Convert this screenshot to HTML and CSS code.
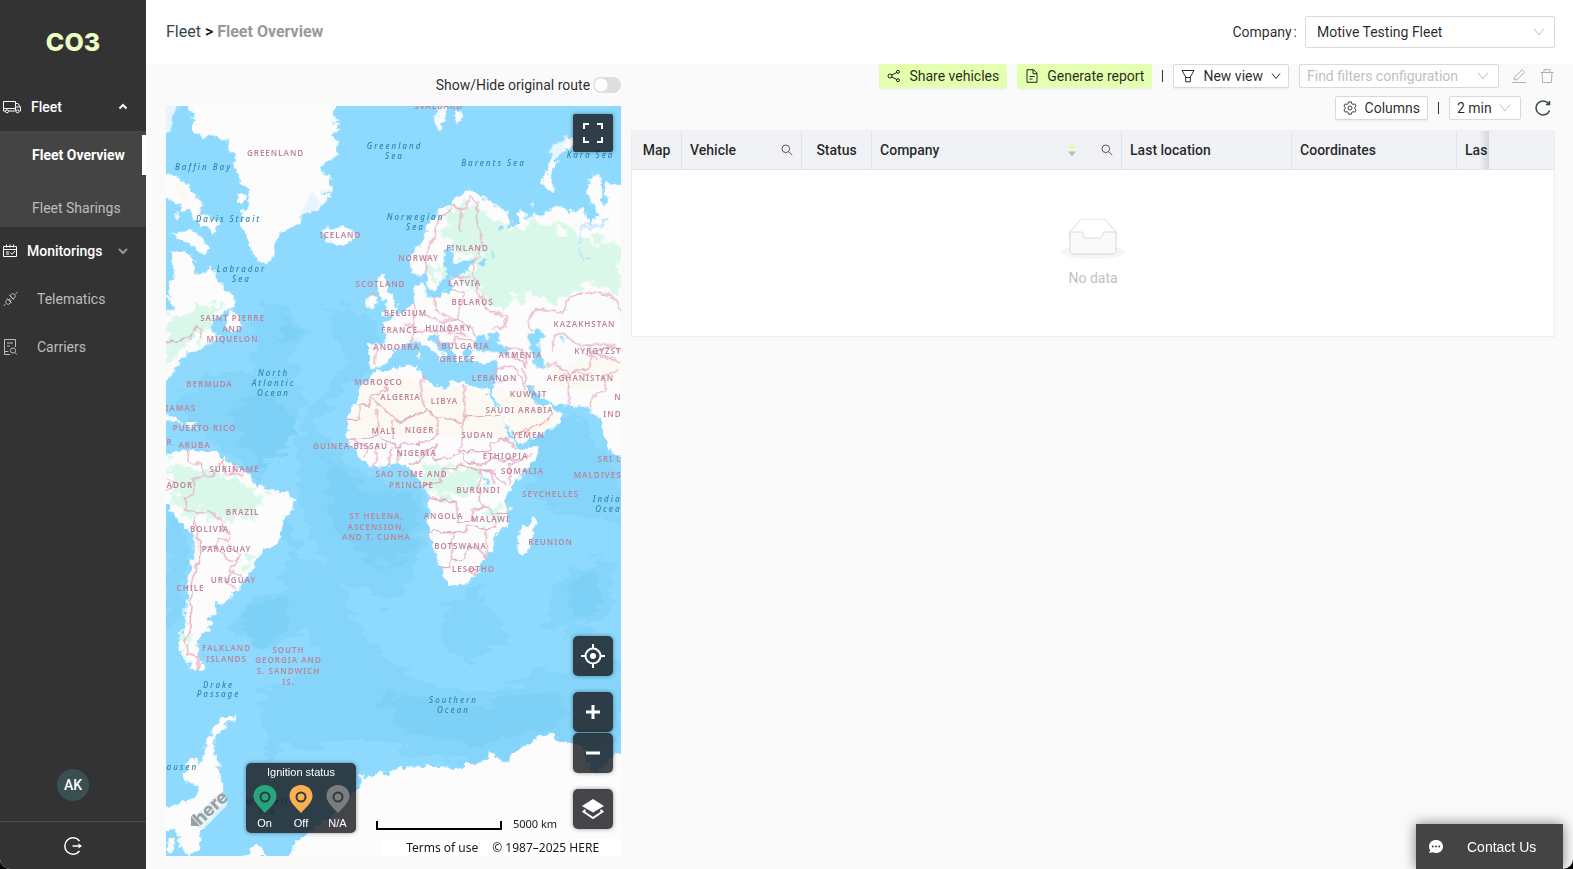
FILE: index.html
```html
<!DOCTYPE html>
<html lang="en">
<head>
<meta charset="utf-8">
<title>Fleet Overview</title>
<link rel="stylesheet" href="styles.css">
</head>
<body>
<div class="app">
  <aside class="sidebar">
    <div class="logo">CO3</div>
    <nav class="nav">
      <button class="nav-item nav-group" type="button">
        <svg class="nav-icon" viewBox="0 0 20 16" width="20" height="16"><path d="M1.500 2.500h12v9M1.500 2.500v9.500h2M6.500 12h7M13.500 4.500h2.500l2.500 4v3.500H17.500M13.500 8h5M1.500 9.500h12"/><circle cx="5" cy="12.300" r="1.500"/><circle cx="15.500" cy="12.300" r="1.500"/></svg>
        <span class="nav-text fleet-text">Fleet</span>
        <svg class="caret" viewBox="0 0 10 10" width="10" height="10"><path d="M1.500 6.500 5 3l3.500 3.500" stroke-width="2"/></svg>
      </button>
      <div class="submenu">
        <a class="sub-item active" href="#overview">Fleet Overview</a>
        <a class="sub-item" href="#sharings">Fleet Sharings</a>
      </div>
      <button class="nav-item nav-group" type="button">
        <svg class="nav-icon" viewBox="0 0 16 16" width="16" height="16"><path d="M1.500 3.500h13v10h-13zM1.500 6.500h13M4.500 1.500v3M8 1.500v3M11.500 1.500v3M4 9h3M4 11h3M8.500 9.500l1.500 1.800L13 8"/></svg>
        <span class="nav-text">Monitorings</span>
        <svg class="caret dim" viewBox="0 0 10 10" width="10" height="10"><path d="M1 3l4 4 4-4" stroke-width="2"/></svg>
      </button>
      <a class="nav-item dim" href="#telematics">
        <svg class="nav-icon" viewBox="0 0 16 16" width="16" height="16"><path d="M15.500 1l-2.200 2.200M8 4.800l1.800-1.800c1.500-1.300 4.500 1.400 3.200 3.200L11.200 8zM7.300 4l4.700 4.700M1.500 15l2.200-2.200M9 11.200l-1.800 1.800c-1.500 1.300-4.500-1.400-3.200-3.200L5.800 8zM5 7.300l4.700 4.700M6.800 9l1.500-1.500M8 10.200l1.500-1.500"/></svg>
        <span class="nav-text">Telematics</span>
      </a>
      <a class="nav-item dim" href="#carriers">
        <svg class="nav-icon" viewBox="0 0 16 16" width="16" height="16"><path d="M8 15.500H2.500v-15h11V8M5 4h6M5 7h3M2.500 12.500h4"/><circle cx="11" cy="11.500" r="2.600"/><path d="M12.800 13.400l2.200 2.300"/></svg>
        <span class="nav-text">Carriers</span>
      </a>
    </nav>
    <div class="avatar">AK</div>
    <div class="logout">
      <button class="icon-btn" type="button" aria-label="Log out"><svg viewBox="0 0 20 20" width="20" height="20"><path d="M16.500 5A8.200 8.200 0 1 0 16.500 15M9.500 10H18"/><path d="M15.500 7.500 19 10l-3.500 2.500z" fill="#fff" stroke="none"/></svg></button>
    </div>
  </aside>

  <div class="page">
    <header class="topbar">
      <div class="crumbs"><a href="#fleet">Fleet</a> <span class="gt">&gt;</span> <span class="current">Fleet Overview</span></div>
      <div class="company">
        <label for="company">Company<span class="colon">:</span></label>
        <div class="select company-select"><select id="company"><option>Motive Testing Fleet</option></select><svg viewBox="0 0 12 12" width="12" height="12"><path d="M1 2.500l5 6.500 5-6.500"/></svg></div>
      </div>
    </header>

    <main class="content">
      <section class="map-col">
        <div class="route-row"><label for="route">Show/Hide original route</label><input id="route" class="switch" type="checkbox" role="switch"></div>
        <div class="map">
          <svg class="world" viewBox="0 0 456 750" preserveAspectRatio="xMidYMid slice">
            <defs>
              <filter id="rough" filterUnits="userSpaceOnUse" x="-60" y="-60" width="1500" height="2400">
                <feTurbulence type="fractalNoise" baseFrequency="0.05" numOctaves="4" seed="4"/>
                <feDisplacementMap in="SourceGraphic" scale="28" xChannelSelector="R" yChannelSelector="G"/>
              </filter>
              <filter id="line" filterUnits="userSpaceOnUse" x="-60" y="-60" width="1500" height="2400">
                <feTurbulence type="fractalNoise" baseFrequency="0.04" numOctaves="2" seed="4"/>
                <feDisplacementMap in="SourceGraphic" scale="24" xChannelSelector="R" yChannelSelector="G"/>
              </filter>
              <filter id="wave" filterUnits="userSpaceOnUse" x="-60" y="-60" width="1500" height="2400">
                <feTurbulence type="fractalNoise" baseFrequency="0.012 0.03" numOctaves="4" seed="9"/>
                <feDisplacementMap in="SourceGraphic" scale="90" xChannelSelector="R" yChannelSelector="G"/>
              </filter>
              <filter id="patch" filterUnits="userSpaceOnUse" x="-60" y="-60" width="1500" height="2400">
                <feTurbulence type="fractalNoise" baseFrequency="0.035" numOctaves="4" seed="12"/>
                <feDisplacementMap in="SourceGraphic" scale="90" xChannelSelector="R" yChannelSelector="G"/>
              </filter>
            </defs>
            <rect class="sea" width="456" height="750"/>
            <g transform="scale(.33333)">
              <g class="deep" filter="url(#wave)">
                <path d="M280 600L360 590 420 680 380 760 420 900 330 1000 260 1200 380 1330 500 1400 560 1520 700 1700 900 1760 1368 1650 1368 1900 1100 2020 820 1960 600 1900 300 1950 280 1780 460 1650 380 1480 330 1500 400 1300 200 1050 60 960 40 900 120 800 260 800z"/>
                <path d="M480 600L600 620 660 720 600 800 520 860 460 960 540 1060 620 1130 780 1150 790 1260 740 1400 680 1500 500 1420 400 1200 380 1000 460 880 540 760z"/>
                <path d="M1100 980L1250 930 1330 1060 1368 1100 1368 1250 1200 1230 1080 1150z"/>
                <path d="M1180 1400L1330 1360 1340 1500 1240 1590 1130 1560z"/>
                <path d="M840 1480L960 1450 1020 1600 900 1680 820 1600z"/>
                <path d="M0 1180L60 1280 60 1500 10 1560 0 1560zM240 1480L380 1440 430 1560 330 1620 200 1580z"/>
              </g>
              <g class="deeper" filter="url(#wave)">
                <path d="M200 900L340 860 380 980 300 1080 220 1000zM480 1060L600 1150 760 1180 740 1340 620 1380 500 1260zM240 1500L360 1480 380 1560 300 1610 230 1570zM1200 1430L1300 1400 1310 1490 1230 1550zM640 1760L900 1800 1200 1740 1180 1860 900 1920 700 1860zM360 620L400 700 340 720z"/>
              </g>
              <g class="land" filter="url(#rough)">
                <g transform="translate(-18 -138)">
                  <path d="M82 110L100 165 98 190 105 215 130 235 160 225 190 235 205 250 218 280 225 310 235 350 245 372 265 385 272 430 250 450 248 495 262 530 270 560 290 600 325 615 340 590 345 555 358 520 375 510 400 505 425 475 425 460 460 455 490 430 512 410 485 395 518 400 512 350 480 330 490 310 535 290 530 240 520 220 540 205 515 180 545 190 520 165 522 110z"/>
                  <path d="M-10 335L50 350 80 370 100 400 130 430 120 460 150 465 178 490 160 525 140 500 115 490 90 450 70 455 55 430 30 415-10 405zM35 520L70 515 95 510 130 535 150 570 135 585 100 560 60 540zM44 467L52 453 62 465 54 480zM232 405L250 395 262 412 250 430 234 422z"/>
                  <path d="M35 575L80 575 105 600 110 640 140 640 150 612 175 665 200 690 225 715 225 745 180 760 150 790 160 820 190 825 150 850 110 870 80 880 60 910 40 945-10 975-10 750 50 750 25 710 30 670 45 650zM215 750L235 770 250 800 215 815 195 800 205 775z"/>
                  <path d="M485 520L505 497 520 512 560 500 585 520 575 545 540 556 515 548z"/>
                  <path d="M655 650L678 645 680 670 690 700 715 740 705 765 670 765 680 735 670 710 650 690zM625 705L645 700 652 725 640 745 618 740z"/>
                </g>
                <g transform="translate(672 -138)">
                  <path d="M60 600L95 545 110 510 140 460 190 430 215 400 245 388 275 410 300 425 350 450 363 480 350 500 300 490 275 480 305 520 330 545 330 515 370 500 395 490 385 450 410 460 405 480 440 465 495 450 510 435 545 455 580 450 600 485 630 470 590 400 600 370 605 338 632 345 635 400 640 440 655 430 640 390 650 365 740 380 740 1190 675 1188 655 1150 635 1100 630 1070 605 1060 600 1040 540 1038 495 1030 450 1010 425 975 410 985 430 1020 455 1040 485 1030 495 1050 522 1065 510 1090 480 1110 430 1135 385 1152 368 1120 345 1085 325 1035 303 985 318 975 320 930 325 905 280 910 250 905 240 890 250 875 235 865 215 880 230 905 205 910 195 880 180 860 150 840 130 825 115 830 150 870 175 880 160 885 155 905 140 880 110 860 85 840 60 850 45 855 20 870 5 885-20 915-40 925-60 920-65 850-10 850-20 790 0 780 15 765 40 755 60 740 75 720 80 680 100 660 110 690 105 715 140 710 190 690 185 650 230 640 215 620 260 605 270 590 240 600 200 610 190 590 190 560 220 520 215 508 195 515 190 550 165 570 160 610 165 640 140 690 120 690 110 640 90 650 65 640z"/>
                  <path d="M130 165L150 145 172 140 170 165 155 215 140 195zM190 165L205 150 218 170 205 188zM540 228L500 260 470 330 455 370 490 400 485 340 510 280 560 250zM425 432L436 430 432 445zM85 880L95 878 92 898 85 895z"/>
                </g>
                <g transform="translate(672 792)">
                  <path d="M-42 0L-80 45-95 90-120 120-130 150-125 175-130 205-110 240-85 270-55 290-20 290 0 285 30 278 60 290 80 315 90 330 105 345 115 385 125 420 115 450 115 490 135 540 150 590 170 630 180 648 230 640 265 610 290 560 315 540 312 500 355 465 357 420 345 380 370 345 410 300 445 250 448 232 400 238 382 230 365 205 340 160 330 120 300 75 290 55 270 52 225 45 195 30 175 40 170 60 120 40 100 20 80-15 40-10 0 0z"/>
                  <path d="M432 440L440 460 415 550 390 555 383 520 390 480 410 465z"/>
                </g>
                <g transform="translate(-18 792)">
                  <path d="M-10 265L40 250 80 235 120 245 170 240 190 265 230 285 270 315 285 345 320 355 380 365 405 390 400 415 370 450 365 500 345 530 310 540 290 560 285 590 260 620 235 660 215 665 215 685 190 700 165 700 170 725 145 745 155 770 130 790 115 815 115 850 140 895 105 900 75 870 60 825 75 780 80 680 90 620 100 550 100 490 60 460 35 420-10 380z"/>
                  <path d="M18 135L50 145 70 162 40 155 18 145zM80 160L110 160 108 170 82 172zM18 0L45 0 18 30z"/>
                </g>
                <g transform="translate(-18 1542)">
                  <path d="M232 285L190 292 160 330 140 370 135 400 120 440 112 410 92 408 70 480 92 488 120 500 110 530 60 552-10 570-10 640 50 625 60 680 90 710 125 680 120 640 185 560 188 500 180 440 162 395 165 350z"/>
                  <path d="M380 740L400 680 430 650 500 600 560 550 600 500 600 460 620 480 650 455 680 460 720 445 780 438 830 440 890 445 960 425 985 420 992 395 1035 430 1060 395 1100 375 1140 345 1175 338 1190 360 1270 380 1280 420 1310 465 1330 440 1360 410 1430 370 1430 740zM245 720L290 670 320 710zM30 650L45 655 40 700 20 690z"/>
                </g>
              </g>
              <g class="sand" filter="url(#rough)">
                <path d="M590 830L700 805 800 850 900 840 960 870 1010 920 1030 990 880 990 700 985 560 990 545 950 580 880z"/>
                <path d="M990 850L1070 850 1120 900 1190 920 1150 970 1060 1005 1030 950zM1150 800L1300 740 1368 760 1368 800 1280 850 1160 840z"/>
                <path d="M85 1290L105 1260 95 1420 85 1450zM20 225L60 250 90 300 40 270z"/>
              </g>
              <g class="green" filter="url(#patch)">
                <path d="M990 380L1100 350 1200 370 1300 400 1368 420 1368 560 1260 530 1180 600 1080 560 1000 620 950 560 930 470z"/>
                <path d="M800 430L850 320 920 290 940 370 880 420 820 380zM790 490L830 460 820 540 790 530zM870 320L930 300 1010 350 960 430 880 460zM880 510L940 490 950 540 890 550z"/>
                <path d="M770 1060L860 1090 940 1080 950 1130 900 1170 820 1180 770 1130z"/>
                <path d="M10 1060L80 1090 150 1100 260 1150 300 1160 260 1230 180 1240 110 1220 60 1240 20 1180z"/>
                <path d="M0 640L120 600 180 590 150 640 90 690 50 740 0 780zM240 1350L280 1340 240 1410zM960 1200L1010 1190 1010 1250 970 1260zM50 1560L70 1560 60 1680 50 1640z"/>
              </g>
              <g class="ice" filter="url(#rough)"><path d="M-30-20H50L20 30 15 80-30 90zM405 320L440 250 470 300 490 270 450 310 400 330zM1160 120L1210 90 1180 150 1150 180zM810 20L830 10 820 60z"/></g>
              <g class="sea-over" filter="url(#rough)"><g transform="translate(672 -138)">
                <path d="M255 845L275 820 290 835 320 815 335 830 320 845 365 865 355 885 300 875 270 875zM415 830L450 810 465 830 445 850 460 900 470 920 440 925 430 890 418 860zM510 825L525 830 522 845zM280 590L292 595 285 615 272 610zM305 570L318 585 312 600zM285 1255L302 1262 298 1280 283 1275zM190 625L240 610 240 625 200 640z"/>
                <path d="M560 500L580 490 640 495 650 470 640 500 575 500 570 590 600 600" class="river"/>
              </g></g>
              <g class="borders" filter="url(#line)">
                <g transform="translate(672 -138)"><path d="M110 640L115 560 135 530 140 490 190 440 215 450 215 510M190 440L230 445 240 412 265 425 260 470 275 530 270 590 250 610 250 650 270 690 280 725 300 750 350 770 350 800 310 810M180 655L240 650M190 690L220 700 210 780 170 770 135 750 130 710M110 765L150 785 200 780 240 800 265 830M75 730L70 800 40 790M60 850L80 815 140 815 150 850 190 855 200 830 250 845M140 815L200 810M180 790L180 820 230 820M350 860L400 870 410 920 390 900 360 880M410 785L430 755 460 745 520 760 540 710 600 695 640 705 670 710 696 760M410 785L430 815M490 870L490 830 520 825 560 850 600 860 640 850 700 870M470 915L500 910 540 940 600 920 610 880 696 900M310 945L325 925 380 920 410 990M400 925L410 970 430 985M540 1035L540 980 525 940M600 1050L610 1010 650 990 640 950 690 930M-52 870L-40 870-45 915M540 940L600 940M660 860L590 880 620 900"/></g>
                <g transform="translate(672 792)"><path d="M-130 145H-90L-88 105-62 105-60 78-5 55 0 30M-60 80L30 155 80 130M-42 112L-32 195-90 205M100 20L95 80 110 125 145 140M225 45V140H330M222 140L215 210 205 250M110 125L10 160 10 205M145 140L215 160M145 140V190L120 215 45 220 20 235-30 200M-50 290L-30 225M-80 265L-60 235-100 210-130 210M0 285L5 235M25 278L30 230M60 290L90 270 140 220 130 270 180 265 215 240 225 275 285 285 300 265 340 270M215 240L240 245 300 245 310 215 350 205 380 240M340 270L400 265 430 250M360 340V285L400 265M100 345L150 340 160 300 215 285 275 300 270 350 265 380 285 410 250 420 250 450 205 455 200 395 115 382M115 485H230L240 470 290 475 290 560M190 490V560L180 590 150 590M190 570L220 565 250 530 290 560M285 410L310 420 315 470 290 475M275 300L300 305 350 345M310 430L355 430M240 595L265 600 255 615 240 605zM305 40L330 40 350 25M380 190L460 165 490 130M270 300H305L310 350"/></g>
                <g transform="translate(-18 792)"><path d="M80 240L90 275 125 285 130 320 160 315 190 265M185 265L200 320 250 310M230 285L215 315M125 320L100 330 105 370 75 385 80 415 110 430 145 420 185 445 190 480 210 490 205 520 180 500 170 530 120 530 105 440M170 530L205 565 230 575 245 550 205 530M245 550L210 605 205 640 230 655M120 530L120 570 100 630 95 700 90 790 75 820 85 850 115 860 115 900M18 370L45 340 18 325M215 605L250 625"/></g>
                <g transform="translate(-18 -138)"><path d="M-10 870L30 845 90 835 110 800 125 805 130 835M630 705L645 695 650 708"/></g>
              </g>
            </g>
            <g class="lbl">
              <text x="110" y="50">GREENLAND</text><text x="175" y="132">ICELAND</text>
              <text x="67" y="215">SAINT PIERRE</text><text x="67" y="226">AND</text><text x="67" y="236">MIQUELON</text>
              <text x="273" y="3">SVALBARD</text><text x="302" y="145">FINLAND</text><text x="253" y="155">NORWAY</text><text x="215" y="181">SCOTLAND</text><text x="299" y="180">LATVIA</text><text x="307" y="199">BELARUS</text><text x="240" y="210">BELGIUM</text><text x="234" y="227">FRANCE</text><text x="283" y="225">HUNGARY</text><text x="419" y="221">KAZAKHSTAN</text><text x="300" y="243">BULGARIA</text><text class="en" x="456" y="248">KYRGYZST</text><text x="231" y="244">ANDORRA</text><text x="292" y="256">GREECE</text><text x="355" y="252">ARMENIA</text>
              <text x="329" y="275">LEBANON</text><text x="415" y="275">AFGHANISTAN</text><text x="363" y="291">KUWAIT</text><text x="213" y="279">MOROCCO</text><text x="235" y="294">ALGERIA</text><text x="279" y="298">LIBYA</text><text x="354" y="307">SAUDI ARABIA</text><text class="en" x="456" y="311">IND</text><text class="en" x="456" y="294">N</text>
              <text x="218" y="328">MALI</text><text x="254" y="327">NIGER</text><text x="312" y="332">SUDAN</text><text x="363" y="332">YEMEN</text><text x="185" y="343">GUINEA-BISSAU</text><text x="251" y="350">NIGERIA</text><text x="340" y="353">ETHIOPIA</text><text x="357" y="368">SOMALIA</text><text class="en" x="456" y="356">SRI L</text><text class="en" x="456" y="372">MALDIVES</text>
              <text x="246" y="371">SAO TOME AND</text><text x="246" y="382">PRINCIPE</text><text x="313" y="387">BURUNDI</text><text x="385" y="391">SEYCHELLES</text><text x="211" y="413">ST HELENA,</text><text x="211" y="424">ASCENSION,</text><text x="211" y="434">AND T. CUNHA</text><text x="278" y="413">ANGOLA</text><text x="325" y="416">MALAWI</text><text x="295" y="443">BOTSWANA</text><text x="385" y="439">REUNION</text><text x="308" y="466">LESOTHO</text>
              <text x="44" y="281">BERMUDA</text><text class="st" x="0" y="305">IAMAS</text><text x="39" y="325">PUERTO RICO</text><text class="st" x="1" y="339">R</text><text x="29" y="342">ARUBA</text><text x="69" y="366">SURINAME</text><text class="st" x="1" y="382">ADOR</text><text x="77" y="409">BRAZIL</text><text x="44" y="426">BOLIVIA</text><text x="61" y="446">PARAGUAY</text><text x="68" y="477">URUGUAY</text><text x="25" y="485">CHILE</text>
              <text x="61" y="545">FALKLAND</text><text x="61" y="556">ISLANDS</text><text x="123" y="547">SOUTH</text><text x="123" y="557">GEORGIA AND</text><text x="123" y="568">S. SANDWICH</text><text x="123" y="579">IS.</text>
            </g>
            <g class="lbl water">
              <text x="38" y="64">Baffin Bay</text><text x="63" y="116">Davis Strait</text><text x="76" y="166">Labrador</text><text x="76" y="176">Sea</text><text x="229" y="43">Greenland</text><text x="229" y="53">Sea</text><text x="250" y="114">Norwegian</text><text x="250" y="124">Sea</text><text x="328" y="60">Barents Sea</text><text x="425" y="52">Kara Sea</text><text x="108" y="270">North</text><text x="108" y="280">Atlantic</text><text x="108" y="290">Ocean</text><text class="en" x="456" y="396">India</text><text class="en" x="456" y="406">Ocea</text><text x="53" y="582">Drake</text><text x="53" y="591">Passage</text><text class="st" x="1" y="664">ausen</text><text x="288" y="597">Southern</text><text x="288" y="607">Ocean</text><text x="102" y="699">Weddell</text><text x="102" y="708">Sea</text>
            </g>
          </svg>

          <div class="here"><svg viewBox="0 0 44 44" width="44" height="44"><path class="halo" d="M13 29L32 10"/><path class="tri" d="M3 24v10h9z"/><text class="here-text" transform="translate(12 34) rotate(-43)">here</text></svg></div>

          <button class="map-btn full" type="button" aria-label="Fullscreen"><svg viewBox="0 0 20 20" width="20" height="20"><path d="M1 6V1h5M14 1h5v5M19 14v5h-5M6 19H1v-5" stroke-width="2"/></svg></button>
          <div class="map-tools">
            <button class="map-btn" type="button" aria-label="My location"><svg viewBox="0 0 24 24" width="24" height="24"><circle cx="12" cy="12" r="7.500" stroke-width="2"/><circle cx="12" cy="12" r="3" fill="#fff" stroke="none"/><path d="M12 0v5M12 19v5M0 12h5M19 12h5" stroke-width="2"/></svg></button>
            <div class="zoom-pair">
              <button class="map-btn" type="button" aria-label="Zoom in"><svg viewBox="0 0 14 14" width="14" height="14"><path d="M0 7h14M7 0v14" stroke-width="3"/></svg></button>
              <button class="map-btn" type="button" aria-label="Zoom out"><svg viewBox="0 0 14 14" width="14" height="14"><path d="M0 7h14" stroke-width="3"/></svg></button>
            </div>
            <button class="map-btn" type="button" aria-label="Layers"><svg viewBox="0 0 22 22" width="22" height="22"><path d="M11 1l11 7-11 6.500L0 8z" fill="#fff" stroke="none"/><path d="M3.500 12L1.500 13.500 11 20l9.500-6.500-2-1.500" stroke-width="2"/></svg></button>
          </div>

          <div class="legend">
            <div>Ignition status</div>
            <ul class="pins">
              <li class="on"><svg viewBox="0 0 24 28" width="24" height="28"><path d="M12 0C5 0 .500 5 .500 11c0 6 6 11 11.500 17 5.500-6 11.500-11 11.500-17C23.500 5 19 0 12 0z"/><circle cx="12" cy="12" r="4.500"/></svg>On</li>
              <li class="off"><svg viewBox="0 0 24 28" width="24" height="28"><path d="M12 0C5 0 .500 5 .500 11c0 6 6 11 11.500 17 5.500-6 11.500-11 11.500-17C23.500 5 19 0 12 0z"/><circle cx="12" cy="12" r="4.500"/></svg>Off</li>
              <li class="na"><svg viewBox="0 0 24 28" width="24" height="28"><path d="M12 0C5 0 .500 5 .500 11c0 6 6 11 11.500 17 5.500-6 11.500-11 11.500-17C23.500 5 19 0 12 0z"/><circle cx="12" cy="12" r="4.500"/></svg>N/A</li>
            </ul>
          </div>
          <div class="scale"><span class="scale-bar"></span><span>5000 km</span></div>
          <div class="terms"><a href="#terms">Terms of use</a><span>© 1987–2025 HERE</span></div>
        </div>
      </section>

      <section class="list-col">
        <div class="tools">
          <button class="btn lime" type="button"><svg viewBox="0 0 14 14" width="14" height="14"><circle cx="3" cy="7" r="2"/><circle cx="11" cy="2.800" r="1.500"/><circle cx="11" cy="11.200" r="1.500"/><path d="M4.800 6l5-2.500M4.800 8l5 2.500"/></svg>Share vehicles</button>
          <button class="btn lime" type="button"><svg viewBox="0 0 14 14" width="14" height="14"><path d="M2 .700h6.500L12 4.200v9.100H2zM8 .700v4h4M4.500 7.500h5M4.500 10h3"/></svg>Generate report</button>
          <span class="sep"></span>
          <button class="btn" type="button"><svg viewBox="0 0 14 14" width="14" height="14"><path d="M1 1.500h12L9.300 8v4.800H4.700V8zM4.700 8.500h4.600"/></svg>New view<svg class="chev" viewBox="0 0 10 10" width="10" height="10"><path d="M1 2.500l4 5 4-5"/></svg></button>
          <div class="select filter-select"><select aria-label="Filters configuration"><option>Find filters configuration</option></select><svg viewBox="0 0 12 12" width="12" height="12"><path d="M1 2.500l5 6.500 5-6.500"/></svg></div>
          <div class="pair">
            <button class="icon-btn mute" type="button" aria-label="Edit"><svg viewBox="0 0 16 16" width="16" height="16"><path d="M1 14.500h14M3.200 12l.600-3L11 1.700l2.600 2.600-7.300 7.200z"/></svg></button>
            <button class="icon-btn mute" type="button" aria-label="Delete"><svg viewBox="0 0 16 16" width="16" height="16"><path d="M1.500 4.500h13M5 4.500v-3h6v3M3 4.500l.600 10h8.800l.600-10"/></svg></button>
          </div>
        </div>
        <div class="tools second">
          <button class="btn" type="button"><svg viewBox="0 0 16 16" width="14" height="14"><path d="M6.500 1h3l.500 2 1.500.900 2-.600L15 5.900 13.500 7.300v1.500L15 10.200l-1.500 2.600-2-.600-1.500.900-.500 2h-3l-.500-2-1.500-.900-2 .600L1 10.200l1.500-1.400V7.300L1 5.900l1.500-2.600 2 .600L6 3z"/><circle cx="8" cy="8" r="2.300"/></svg>Columns</button>
          <span class="sep"></span>
          <div class="select min-select"><select aria-label="Refresh interval"><option>2 min</option></select><svg viewBox="0 0 12 12" width="12" height="12"><path d="M1 2.500l5 6.500 5-6.500"/></svg></div>
          <button class="icon-btn reload" type="button" aria-label="Refresh"><svg viewBox="0 0 16 16" width="16" height="16"><path d="M13.500 3.500A7 7 0 1 0 14.600 10.500M14.500 1v3.500h-3.500"/></svg></button>
        </div>

        <table class="grid">
          <colgroup><col class="c50"><col class="c120"><col class="c70"><col class="c250"><col class="c170"><col class="c165"><col class="c32"><col></colgroup>
          <thead><tr>
            <th class="mid">Map</th>
            <th><div class="th">Vehicle<svg class="find" viewBox="0 0 12 12" width="12" height="12"><circle cx="4.800" cy="4.800" r="3.800"/><path d="M7.600 7.600l3.600 3.600"/></svg></div></th>
            <th class="mid">Status</th>
            <th><div class="th">Company<svg class="sorter" viewBox="0 0 8 12" width="8" height="12"><path fill="#dcfca8" d="M0 4.500 4 0l4 4.500z"/><path fill="#b8babe" d="M0 7.500h8L4 12z"/></svg><svg class="find" viewBox="0 0 12 12" width="12" height="12"><circle cx="4.800" cy="4.800" r="3.800"/><path d="M7.600 7.600l3.600 3.600"/></svg></div></th>
            <th>Last location</th>
            <th>Coordinates</th>
            <th class="clip">Las</th>
            <th class="fixed"></th>
          </tr></thead>
          <tbody><tr><td colspan="8">
            <svg viewBox="0 0 64 41" width="64" height="41"><ellipse cx="32" cy="33" rx="32" ry="7" fill="#f5f5f5"/><path d="M55 12.800 44.900 1.300C44.400.500 43.700 0 42.900 0H21.100c-.800 0-1.500.500-2 1.300L9 12.800V22h46z" fill="#fff" stroke="#d9d9d9"/><path d="M41.600 16c0-1.700 1-3 2.200-3H55v18.100c0 2.200-1.300 3.900-3 3.900H12c-1.700 0-3-1.700-3-3.900V13h11.200c1.200 0 2.200 1.300 2.200 2.900 0 1.700 1 3.100 2.200 3.100h14.800c1.200 0 2.200-1.400 2.200-3z" fill="#fafafa" stroke="#d9d9d9"/></svg>
            <p>No data</p>
          </td></tr></tbody>
        </table>
      </section>
    </main>
  </div>
  <button class="contact" type="button"><svg viewBox="0 0 16 16" width="16" height="16"><path d="M8 1c4 0 7 2.700 7 6.500S12 14 8 14c-1.300 0-2.400-.300-3.300-.700L1 14l1.200-2.800C1.400 10.200 1 9 1 7.500 1 3.700 4 1 8 1z" fill="#fff"/><g fill="#444"><circle cx="4.800" cy="7.500" r="1"/><circle cx="8" cy="7.500" r="1"/><circle cx="11.200" cy="7.500" r="1"/></g></svg>Contact Us</button>
</div>
</body>
</html>
```
FILE: styles.css
```css
* { box-sizing: border-box; }
html { background: #000; }
body { margin: 0; font: 14px/20px Roboto, "Liberation Sans", sans-serif; color: rgba(0, 0, 0, .85); }
button, select, input { font: inherit; color: inherit; margin: 0; }
button { cursor: pointer; }
a { color: inherit; text-decoration: none; }
svg { display: block; flex: none; fill: none; stroke: currentColor; }

.app { display: grid; grid-template-columns: 146px 1fr; min-height: 100vh; background: #fafafa; border-radius: 0 0 10px 10px; overflow: hidden; }

.sidebar { display: flex; flex-direction: column; background: #333; color: #fff; }
.logo { height: 83px; padding-top: 26px; text-align: center; font: 800 25px/32px Inter, sans-serif; color: #e9ffc4; }
.nav-item { display: flex; align-items: center; width: 100%; height: 48px; padding: 0 18px 0 2px; border: 0; background: none; font-size: 14px; text-align: left; }
.nav-group { font-weight: 500; color: #fff; }
.nav-icon { stroke-width: 1; }
.nav-text { margin-left: 9px; flex: 1; }
.nav-item.dim { color: #bdbdbd; }
.nav-item.dim .nav-text { margin-left: 19px; }
.caret.dim { color: #999; }
.submenu { background: #444; height: 96px; padding-top: 4px; display: flex; flex-direction: column; gap: 13px; }
.sub-item { height: 40px; padding: 0 32px; line-height: 40px; color: #bdbdbd; white-space: nowrap; }
.sub-item.active { color: #fff; font-weight: 700; border-right: 4px solid #fff; padding-right: 0; }
.avatar { width: 32px; height: 32px; margin: auto auto 20px; border-radius: 50%; background: #3a4f52; text-align: center; line-height: 32px; font-weight: 500; }
.logout { height: 48px; border-top: 1px solid #3f5557; display: grid; place-items: center; }
.icon-btn { border: 0; padding: 0; background: none; }
.logout svg { stroke: #fff; stroke-width: 1.500; }

.page { display: flex; flex-direction: column; min-width: 0; }
.topbar { height: 64px; padding: 0 18px 0 20px; background: #fff; display: flex; align-items: center; justify-content: space-between; }
.crumbs { font-size: 16px; color: #33474b; }
.crumbs .gt { color: #111; font-weight: 500; }
.crumbs .current { color: #999; font-weight: 700; }
.company { display: flex; align-items: center; gap: 8px; }
.colon { margin-left: 2px; }

.select { display: grid; align-items: center; }
.select select { grid-area: 1 / 1; appearance: none; width: 100%; height: 24px; padding: 0 7px; border: 1px solid #d9d9d9; border-radius: 2px; background: #fff; }
.select svg { grid-area: 1 / 1; justify-self: end; margin-right: 10px; color: #bfbfbf; pointer-events: none; }
.company-select { width: 250px; }
.company-select select { height: 32px; padding: 0 11px; }

.content { flex: 1; display: grid; grid-template-columns: 33fr 67fr; gap: 10px; padding: 0 18px 13px 20px; }
.map-col, .list-col { display: flex; flex-direction: column; min-width: 0; }
.route-row { height: 42px; display: flex; justify-content: flex-end; align-items: center; gap: 3px; }
.switch { appearance: none; width: 28px; height: 16px; border-radius: 8px; background: radial-gradient(circle at 8px 8px, #fff 6px, #dedede 7px); }

.map { position: relative; flex: 1; overflow: hidden; }
.world { position: absolute; inset: 0; width: 100%; height: 100%; stroke: none; }
.sea, .sea-over { fill: #8ddafe; }
.river { fill: none; stroke: #8ddafe; stroke-width: 3; }
.deep { fill: #85d5fa; }
.deeper { fill: #7dd0f6; }
.land { fill: #fcfcfc; }
.sand { fill: #fcf8f2; }
.green { fill: #daf8ea; }
.ice { fill: #e6f5ff; }
.borders { fill: none; stroke: #e5abc0; stroke-width: 4; }
.lbl { font: 600 8px "Noto Sans", sans-serif; letter-spacing: 1px; text-anchor: middle; fill: #bd849c; }
.water { font-weight: 500; font-style: italic; letter-spacing: 2px; fill: #3585ab; }
.st { text-anchor: start; }
.en { text-anchor: end; }

.here { position: absolute; left: 22px; bottom: 20px; }
.halo { stroke: rgba(225, 243, 250, .9); stroke-width: 15; stroke-linecap: round; }
.tri { fill: #9aa0a4; stroke: none; }
.here-text { font: 800 18px Inter, sans-serif; fill: #9aa0a4; stroke: none; }

.map-btn { display: grid; place-items: center; width: 40px; height: 40px; padding: 0; border: 0; border-radius: 5px; background: rgba(21, 23, 27, .8); color: #fff; box-shadow: 0 0 4px rgba(0, 0, 0, .4); }
.full { position: absolute; top: 8px; right: 8px; height: 38px; border-radius: 2px; }
.map-tools { position: absolute; right: 8px; bottom: 27px; display: flex; flex-direction: column; gap: 16px; }
.zoom-pair { display: grid; gap: 1px; }
.legend { position: absolute; left: 80px; bottom: 23px; width: 110px; height: 70px; padding-top: 3px; border-radius: 5px; background: rgba(21, 23, 27, .8); color: #fff; font: 11px/13px "Liberation Sans", sans-serif; text-align: center; box-shadow: 0 0 4px rgba(0, 0, 0, .4); }
.pins { display: flex; justify-content: space-between; margin: 6px 0 0; padding: 0 6px; list-style: none; }
.pins li { display: grid; justify-items: center; gap: 4px; width: 25px; }
.pins svg { stroke: none; }
.pins circle { stroke: #2c3c45; stroke-width: 2; }
.on svg { fill: #27a67a; }
.off svg { fill: #fbb04f; }
.na svg { fill: #7c7c7c; }
.scale, .terms { position: absolute; display: flex; font: 12px/17px "Noto Sans", sans-serif; color: #111a22; }
.scale { right: 64px; bottom: 24px; gap: 11px; align-items: flex-end; font-size: 11px; }
.scale-bar { width: 126px; height: 9px; margin-bottom: 2px; border: 2px solid #000; border-top: 0; }
.terms { right: 0; bottom: 0; gap: 14px; padding: 0 22px 0 24px; background: #fff; }

.tools { display: flex; justify-content: flex-end; align-items: center; height: 24px; gap: 10px; }
.second { margin: 8px 0 10px; }
.btn { display: flex; align-items: center; gap: 8px; height: 24px; padding: 0 7px; border: 1px solid #d9d9d9; border-radius: 2px; background: #fff; box-shadow: 0 2px 0 rgba(0, 0, 0, .04); white-space: nowrap; }
.lime { background: #e4ffb0; border-color: #e4ffb0; }
.sep { width: 1px; height: 12px; background: #333; }
.filter-select { width: 200px; color: #bfbfbf; }
.min-select { width: 72px; }
.pair { display: flex; gap: 12px; margin-left: 2px; }
.mute { color: #b0b0b0; }
.reload { color: #33474b; margin: 0 4px; }
.reload svg { stroke-width: 1.500; }

.grid { width: 100%; table-layout: fixed; border-collapse: separate; border-spacing: 0; border: 1px solid #eee; background: #fff; }
.c50 { width: 50px; }
.c120 { width: 120px; }
.c70 { width: 70px; }
.c250 { width: 250px; }
.c170 { width: 170px; }
.c165 { width: 165px; }
.c32 { width: 32px; }
.grid th { height: 39px; padding: 0 8px; background: #f0f2f5; border-right: 1px solid #dfe4ea; border-bottom: 1px solid #dfe4ea; font-weight: 500; text-align: left; white-space: nowrap; }
.grid .mid { text-align: center; padding: 0; }
.grid .clip { padding-right: 0; border-right: 0; background: linear-gradient(90deg, #f0f2f5 70%, #d4d6d9); }
.grid .fixed { border-right: 0; }
.th { display: flex; align-items: center; }
.find { margin-left: auto; color: #555; }
.sorter { margin-left: auto; stroke: none; }
.sorter + .find { margin-left: 25px; }
.grid td { height: 166px; padding: 0; text-align: center; color: #bfbfbf; }
.grid td svg { margin: 0 auto 8px; stroke: none; }
.grid p { margin: 0; }

.contact { position: fixed; right: 10px; bottom: 0; width: 147px; height: 45px; display: flex; align-items: center; gap: 23px; padding: 0 12px; border: 0; background: #444; color: #fff; font: 14px/20px "Liberation Sans", sans-serif; box-shadow: 0 0 12px rgba(0, 0, 0, .5); }
.contact svg { stroke: none; }
```
